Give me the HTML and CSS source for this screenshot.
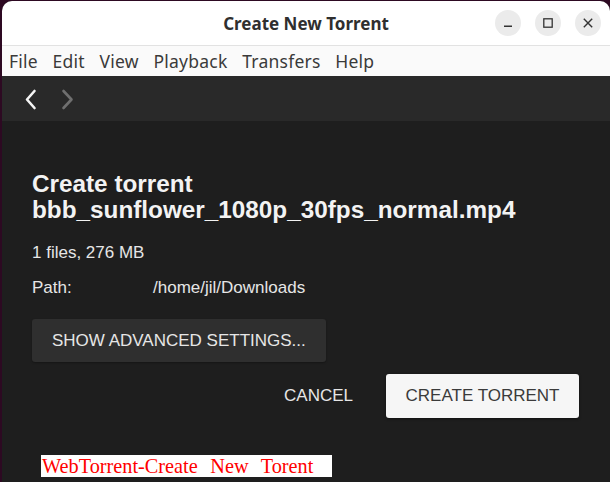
FILE: index.html
```html
<!DOCTYPE html>
<html lang="en">
<head>
<meta charset="utf-8">
<title>Create New Torrent</title>
<link rel="stylesheet" href="styles.css">
</head>
<body>
<div class="window">
  <header class="titlebar">
    <div class="spacer"></div>
    <div class="title">Create New Torrent</div>
    <div class="controls">
      <span class="ctl"><svg width="16" height="16" viewBox="0 0 16 16"><path d="M4 11.2H12" stroke="#333" stroke-width="1.4" fill="none"/></svg></span>
      <span class="ctl"><svg width="16" height="16" viewBox="0 0 16 16"><rect x="3.8" y="3.8" width="8.4" height="8.4" stroke="#333" stroke-width="1.3" fill="none"/></svg></span>
      <span class="ctl"><svg width="16" height="16" viewBox="0 0 16 16"><path d="M3.8 3.8L12.2 12.2M12.2 3.8L3.8 12.2" stroke="#333" stroke-width="1.4" fill="none"/></svg></span>
    </div>
  </header>
  <nav class="menubar">
    <span class="menu-item">File</span>
    <span class="menu-item">Edit</span>
    <span class="menu-item">View</span>
    <span class="menu-item">Playback</span>
    <span class="menu-item">Transfers</span>
    <span class="menu-item">Help</span>
  </nav>
  <div class="navbar">
    <svg class="chev" width="14" height="22" viewBox="0 0 14 22"><polyline points="10.5,3 3,11.5 10.5,20" fill="none" stroke="#f4f4f4" stroke-width="2.6" stroke-linecap="round" stroke-linejoin="round"/></svg>
    <svg class="chev" width="14" height="22" viewBox="0 0 14 22"><polyline points="2.5,3 10.5,11.5 2.5,20" fill="none" stroke="#6f6f6f" stroke-width="2.6" stroke-linecap="round" stroke-linejoin="round"/></svg>
  </div>
  <main class="content">
    <h1 class="heading"><span class="heading-line">Create torrent</span><span class="heading-line">bbb_sunflower_1080p_30fps_normal.mp4</span></h1>
    <p class="summary">1 files, 276 MB</p>
    <div class="path-row"><span class="path-label">Path:</span><span class="path-value">/home/jil/Downloads</span></div>
    <button class="btn-dark">SHOW ADVANCED SETTINGS...</button>
    <div class="actions">
      <button class="btn-text">CANCEL</button>
      <button class="btn-light">CREATE TORRENT</button>
    </div>
    <div class="caption">WebTorrent-Create  New  Torent</div>
  </main>
</div>
</body>
</html>
```
FILE: styles.css
```css
html, body {
  margin: 0;
  height: 100%;
}
body {
  background: #2d0922;
  overflow: hidden;
}
.window {
  margin: 1px 0 0 2px;
  height: calc(100% - 1px);
  display: flex;
  flex-direction: column;
  border-radius: 10px 10px 0 0;
  overflow: hidden;
  background: #1e1e1e;
}
.titlebar {
  flex: none;
  height: 44px;
  display: grid;
  grid-template-columns: 1fr auto 1fr;
  align-items: center;
  background: #ffffff;
  border-bottom: 1px solid #e2e2e2;
}
.title {
  font: 700 17px "Noto Sans", sans-serif;
  color: #2f2f2f;
}
.controls {
  justify-self: end;
  display: flex;
  gap: 14px;
  padding-right: 9px;
}
.ctl {
  width: 26px;
  height: 26px;
  border-radius: 50%;
  background: #ebebeb;
  display: flex;
  align-items: center;
  justify-content: center;
}
.menubar {
  flex: none;
  height: 30px;
  display: flex;
  align-items: center;
  padding-left: 0;
  background: #fafafa;
}
.menu-item {
  padding: 0 7.6px 0 7px;
  font: 17.5px "Noto Sans", sans-serif;
  letter-spacing: 0.25px;
  color: #3a3a3a;
}
.navbar {
  flex: none;
  height: 45px;
  display: flex;
  align-items: center;
  gap: 23px;
  padding-left: 22px;
  background: #292929;
}
.chev {
  display: block;
}
.content {
  flex: 1;
  display: flex;
  flex-direction: column;
  align-items: flex-start;
  padding: 50px 31px 0 30px;
  font-family: "Liberation Sans", Arial, sans-serif;
  color: #e6e6e6;
}
.heading {
  margin: 0;
  font-size: 24.3px;
  line-height: 26px;
  font-weight: 700;
  color: #f3f3f3;
}
.heading-line {
  display: block;
}
.summary {
  margin: 20px 0 0;
  font-size: 17px;
  line-height: 20px;
}
.path-row {
  margin-top: 15px;
  display: grid;
  grid-template-columns: 121px auto;
  font-size: 17px;
  line-height: 20px;
}
.btn-dark {
  margin-top: 21px;
  height: 43px;
  padding: 0 20px;
  border: none;
  border-radius: 3px;
  background: #2f2f2f;
  color: #e6e6e6;
  font: 17px "Liberation Sans", Arial, sans-serif;
  box-shadow: 0 1px 2px rgba(0, 0, 0, 0.3);
}
.actions {
  align-self: stretch;
  margin-top: 12px;
  display: flex;
  justify-content: flex-end;
  gap: 13px;
}
.btn-text {
  height: 44px;
  padding: 0 20px;
  border: none;
  background: transparent;
  color: #e6e6e6;
  font: 17px "Liberation Sans", Arial, sans-serif;
}
.btn-light {
  height: 44px;
  padding: 0 19.5px;
  border: none;
  border-radius: 3px;
  background: #f6f6f6;
  color: #3b3b3b;
  font: 17px "Liberation Sans", Arial, sans-serif;
  box-shadow: 0 1px 3px rgba(0, 0, 0, 0.45);
}
.caption {
  margin: 37px 0 0 9px;
  width: 290px;
  height: 22px;
  padding-left: 1px;
  background: #ffffff;
  color: #ff0000;
  font: 20.3px/22px "Liberation Serif", "Times New Roman", serif;
  word-spacing: 1.2px;
  white-space: pre;
}
```
